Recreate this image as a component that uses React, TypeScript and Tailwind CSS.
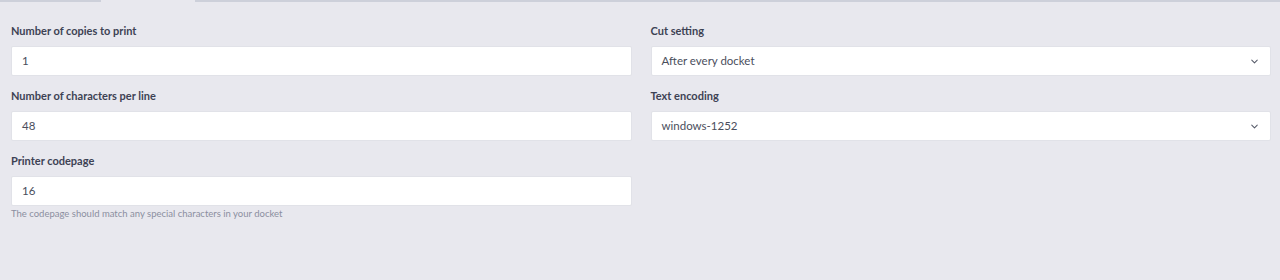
import { ChevronDown } from 'lucide-react';

interface FieldProps {
  label: string;
  value: string;
  select?: boolean;
  help?: string;
}

function Field({ label, value, select, help }: FieldProps) {
  return (
    <div className="flex flex-col">
      <label className="h-[14px] text-[11px] leading-[14px] font-bold text-[#3d4254]">{label}</label>
      <div className="mt-[8px] flex h-[30px] items-center justify-between rounded-[2px] border border-[#e1e2e8] bg-white pl-[10px] pr-[10px] text-[11.5px] text-[#4a4e5c]">
        <span>{value}</span>
        {select && <ChevronDown size={11} strokeWidth={2.2} className="text-[#555a68]" />}
      </div>
      {help && <p className="mt-[2px] text-[9.5px] leading-[12px] text-[#8b8fa0]">{help}</p>}
    </div>
  );
}

export default function App() {
  return (
    <div className="h-[280px] w-full bg-[#e8e8ee] font-['Lato',sans-serif]">
      <div className="flex h-[2px]">
        <div className="w-[101px] bg-[#cdd0da]" />
        <div className="w-[94px]" />
        <div className="flex-1 bg-[#cdd0da]" />
      </div>
      <div className="grid grid-cols-2 gap-x-[19px] gap-y-[13px] pl-[11px] pr-[9px] pt-[22px]">
        <Field label="Number of copies to print" value="1" />
        <Field label="Cut setting" value="After every docket" select />
        <Field label="Number of characters per line" value="48" />
        <Field label="Text encoding" value="windows-1252" select />
        <Field
          label="Printer codepage"
          value="16"
          help="The codepage should match any special characters in your docket"
        />
      </div>
    </div>
  );
}
